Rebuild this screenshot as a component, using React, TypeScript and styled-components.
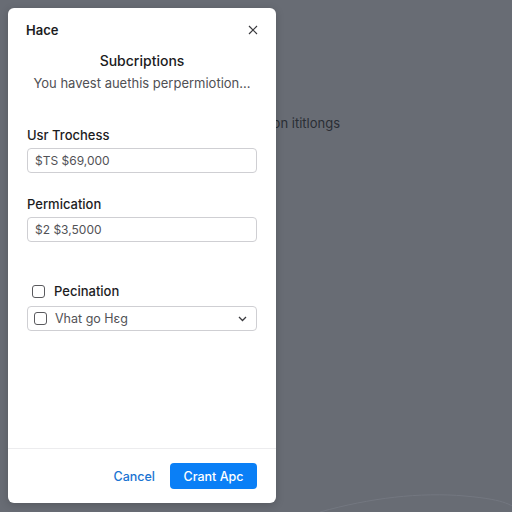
import React from "react";
import styled, { createGlobalStyle } from "styled-components";

const GlobalStyle = createGlobalStyle`
  html, body {
    margin: 0;
    padding: 0;
    background: #686c74;
  }
  body {
    font-family: Inter, "Liberation Sans", Arial, sans-serif;
  }
  #root {
    height: 512px;
  }
`;

const Page = styled.div`
  position: relative;
  width: 512px;
  height: 512px;
  overflow: hidden;
  background: #686c74;
  display: flex;
  flex-direction: column;
`;

const BackgroundHeading = styled.div`
  width: 340px;
  margin-top: 115px;
  text-align: right;
  font-size: 13px;
  line-height: 17px;
  color: #2a2e34;
  white-space: nowrap;
`;

const Wave = styled.svg`
  margin-top: auto;
  display: block;
`;

const Modal = styled.div`
  position: absolute;
  left: 8px;
  top: 8px;
  width: 268px;
  height: 495px;
  background: #ffffff;
  border-radius: 6px;
  box-shadow: 0 2px 8px rgba(0, 0, 0, 0.18);
  display: flex;
  flex-direction: column;
`;

const Header = styled.div`
  height: 43px;
  padding: 0 16px 0 18px;
  display: flex;
  align-items: center;
  justify-content: space-between;
  box-sizing: border-box;
`;

const HeaderTitle = styled.span`
  font-size: 13px;
  font-weight: 600;
  color: #1c1c1e;
`;

const CloseButton = styled.button`
  border: 0;
  background: none;
  padding: 0;
  width: 14px;
  height: 14px;
  display: flex;
  align-items: center;
  justify-content: center;
  cursor: pointer;
`;

const Body = styled.div`
  flex: 1;
  padding: 0 19px;
  display: flex;
  flex-direction: column;
`;

const Title = styled.div`
  font-size: 14px;
  line-height: 20px;
  font-weight: 500;
  color: #1c1c1e;
  text-align: center;
`;

const Subtitle = styled.div`
  margin-top: 3px;
  font-size: 13px;
  line-height: 18px;
  color: #505054;
  text-align: center;
`;

const Label = styled.div<{ $gap: number }>`
  margin-top: ${(p) => p.$gap}px;
  font-size: 13px;
  line-height: 18px;
  font-weight: 500;
  color: #1c1c1e;
`;

const Field = styled.div`
  margin-top: 4px;
  height: 25px;
  box-sizing: border-box;
  border: 1px solid #cfcfd3;
  border-radius: 4px;
  padding: 0 7px;
  display: flex;
  align-items: center;
  font-size: 12px;
  color: #525256;
`;

const CheckRow = styled.label`
  margin-top: 40px;
  height: 18px;
  display: flex;
  align-items: center;
  gap: 9px;
  padding-left: 5px;
  font-size: 13px;
  font-weight: 500;
  color: #1c1c1e;
`;

const Box = styled.span`
  width: 11px;
  height: 11px;
  border: 1.3px solid #5a5a5e;
  border-radius: 3px;
  flex-shrink: 0;
`;

const Select = styled.div`
  margin-top: 6px;
  height: 25px;
  box-sizing: border-box;
  border: 1px solid #cfcfd3;
  border-radius: 4px;
  padding: 0 9px 0 6px;
  display: flex;
  align-items: center;
  gap: 8px;
  font-size: 12.5px;
  color: #525256;
`;

const SelectText = styled.span`
  flex: 1;
`;

const Footer = styled.div`
  height: 55px;
  border-top: 1px solid #ececee;
  box-sizing: border-box;
  padding: 0 19px;
  display: flex;
  align-items: center;
  justify-content: flex-end;
  gap: 15px;
`;

const TextButton = styled.button`
  border: 0;
  background: none;
  padding: 0;
  font-family: inherit;
  font-size: 12.5px;
  font-weight: 500;
  color: #1a74d2;
`;

const PrimaryButton = styled.button`
  width: 87px;
  height: 26px;
  border: 0;
  border-radius: 4px;
  background: #0a7ff6;
  color: #ffffff;
  font-family: inherit;
  font-size: 12.5px;
  font-weight: 500;
`;

const Chevron = () => (
  <svg width="9" height="6" viewBox="0 0 9 6">
    <path d="M1 1l3.5 3.5L8 1" fill="none" stroke="#3a3a3e" strokeWidth="1.3" />
  </svg>
);

const App = () => (
  <>
    <GlobalStyle />
    <Page>
      <BackgroundHeading>Subscription ititlongs</BackgroundHeading>
      <Wave width="512" height="40" viewBox="0 0 512 40">
        <path
          d="M320 40 C 370 26, 420 20, 465 24 S 510 34, 520 38"
          fill="none"
          stroke="#737780"
          strokeWidth="1"
        />
      </Wave>
      <Modal>
        <Header>
          <HeaderTitle>Hace</HeaderTitle>
          <CloseButton aria-label="Close">
            <svg width="10" height="10" viewBox="0 0 10 10">
              <path d="M1 1l8 8M9 1l-8 8" stroke="#3a3a3e" strokeWidth="1.2" />
            </svg>
          </CloseButton>
        </Header>
        <Body>
          <Title>Subcriptions</Title>
          <Subtitle>You havest auethis perpermiotion...</Subtitle>
          <Label $gap={34}>Usr Trochess</Label>
          <Field>$TS $69,000</Field>
          <Label $gap={22}>Permication</Label>
          <Field>$2 $3,5000</Field>
          <CheckRow>
            <Box />
            Pecination
          </CheckRow>
          <Select>
            <Box />
            <SelectText>Vhat go Hεg</SelectText>
            <Chevron />
          </Select>
        </Body>
        <Footer>
          <TextButton>Cancel</TextButton>
          <PrimaryButton>Crant Apc</PrimaryButton>
        </Footer>
      </Modal>
    </Page>
  </>
);

export default App;
